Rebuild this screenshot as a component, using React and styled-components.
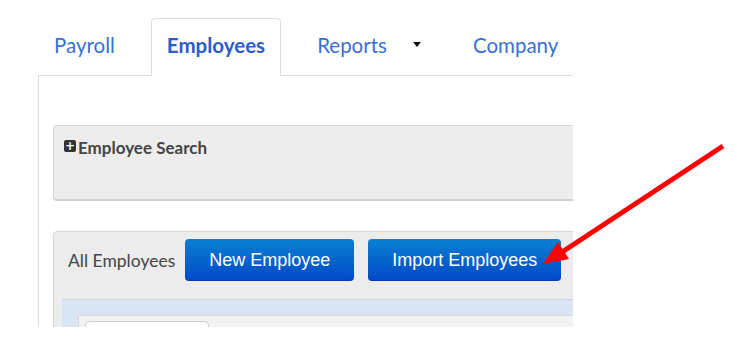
import React from 'react';
import styled, { createGlobalStyle } from 'styled-components';

const GlobalStyle = createGlobalStyle`
  html, body {
    margin: 0;
    padding: 0;
    background: #fff;
  }
  body {
    font-family: Lato, 'Open Sans', sans-serif;
  }
`;

const Stage = styled.div`
  position: relative;
  width: 735px;
  height: 341px;
  background: #fff;
`;

const Frame = styled.div`
  width: 573px;
  height: 327px;
  overflow: hidden;
  padding: 18px 0 0 38px;
  box-sizing: border-box;
`;

const Shell = styled.div`
  width: 600px;
`;

const TabBar = styled.ul`
  display: flex;
  gap: 20px;
  margin: 0;
  padding: 0;
  list-style: none;
  border-bottom: 1px solid #dddddd;
`;

const Tab = styled.li`
  display: flex;
  align-items: center;
  height: 58px;
  padding: 0 15px 5px;
  box-sizing: border-box;
  margin-bottom: -1px;
  font-size: 20.5px;
  font-weight: ${(p) => (p.active ? 700 : 400)};
  color: ${(p) => (p.active ? '#2c5ccb' : '#3a6fd6')};
  background: ${(p) => (p.active ? '#fff' : 'transparent')};
  border: 1px solid ${(p) => (p.active ? '#dddddd' : 'transparent')};
  border-bottom-color: ${(p) => (p.active ? '#fff' : 'transparent')};
  border-radius: 4px 4px 0 0;
`;

const Caret = styled.span`
  margin-left: 26px;
  width: 0;
  height: 0;
  border-left: 4.5px solid transparent;
  border-right: 4.5px solid transparent;
  border-top: 5px solid #111;
  margin-top: 0;
`;

const Content = styled.div`
  border-left: 1px solid #dddddd;
  padding: 49px 0 0 14px;
  height: 300px;
  box-sizing: border-box;
`;

const SearchBox = styled.div`
  height: 76px;
  box-sizing: border-box;
  background: #ededed;
  border: 1px solid #d6d6d6;
  border-bottom: 2px solid #d2d2d2;
  border-radius: 4px;
  padding: 11px 0 0 10px;
  display: flex;
  align-items: flex-start;
  gap: 2px;
  font-size: 17px;
  font-weight: 700;
  color: #454545;
`;

const PlusIcon = styled.span`
  display: inline-flex;
  align-items: center;
  justify-content: center;
  width: 12px;
  height: 12px;
  margin-top: 3px;
  border-radius: 2px;
  background: #333;
  color: #fff;
  font-size: 12px;
  line-height: 12px;
  font-weight: 700;
  font-family: 'DejaVu Sans', sans-serif;
`;

const ListPanel = styled.div`
  margin-top: 30px;
  background: #ececec;
  border: 1px solid #d6d6d6;
  border-radius: 4px;
  padding-top: 7px;
  height: 200px;
  box-sizing: border-box;
`;

const Toolbar = styled.div`
  display: flex;
  align-items: center;
  padding-left: 14px;
`;

const Label = styled.span`
  font-size: 17.5px;
  color: #454545;
  margin-right: 10px;
`;

const BlueButton = styled.button`
  height: 42px;
  padding: 0 24px;
  margin-right: 14px;
  border: none;
  border-radius: 4px;
  background: linear-gradient(#0a80d2, #0048c8);
  color: #fff;
  font-family: 'Liberation Sans', Arial, sans-serif;
  font-size: 18px;
  box-shadow: inset 0 -1px 0 rgba(0, 0, 0, 0.15);
`;

const Band = styled.div`
  margin: 18px 0 0 8px;
  background: #d9e4f4;
  border-top: 1px solid #cfd3da;
  padding: 15px 0 0 16px;
  height: 120px;
  box-sizing: border-box;
`;

const Grid = styled.div`
  background: #f3f3f3;
  border-top: 1px solid #d8d8d8;
  border-left: 1px solid #d8d8d8;
  padding: 5px 0 0 6px;
  height: 100%;
`;

const Field = styled.div`
  width: 122px;
  height: 30px;
  background: #fff;
  border: 1px solid #cfcfcf;
  border-radius: 4px;
`;

const Overlay = styled.svg`
  position: absolute;
  left: 0;
  top: 0;
  pointer-events: none;
`;

export default function App() {
  return (
    <Stage>
      <GlobalStyle />
      <Frame>
        <Shell>
          <TabBar>
            <Tab>Payroll</Tab>
            <Tab active>Employees</Tab>
            <Tab>
              Reports
              <Caret />
            </Tab>
            <Tab>Company</Tab>
          </TabBar>
          <Content>
            <SearchBox>
              <PlusIcon>+</PlusIcon>
              Employee Search
            </SearchBox>
            <ListPanel>
              <Toolbar>
                <Label>All Employees</Label>
                <BlueButton>New Employee</BlueButton>
                <BlueButton>Import Employees</BlueButton>
              </Toolbar>
              <Band>
                <Grid>
                  <Field />
                </Grid>
              </Band>
            </ListPanel>
          </Content>
        </Shell>
      </Frame>
      <Overlay width="735" height="341" viewBox="0 0 735 341">
        <line x1="723" y1="146" x2="556" y2="256" stroke="#ff0000" strokeWidth="5" />
        <polygon points="543,264 558,242 569,259" fill="#ff0000" />
      </Overlay>
    </Stage>
  );
}
